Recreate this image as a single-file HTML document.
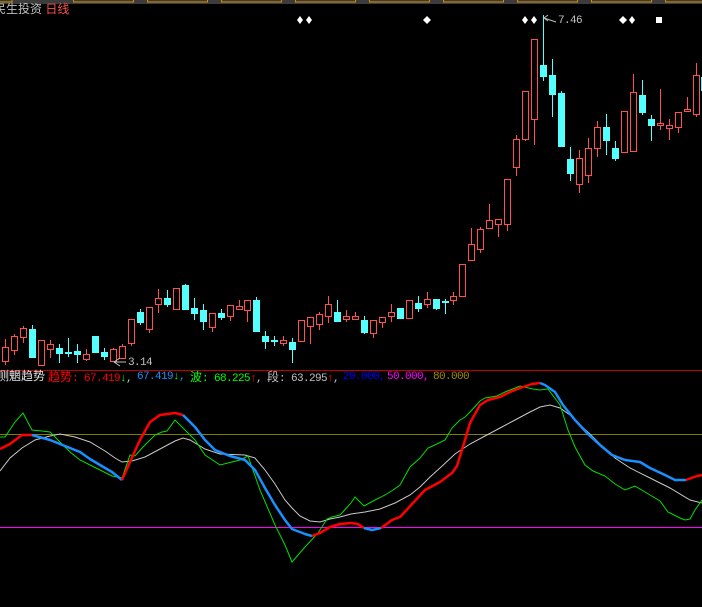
<!DOCTYPE html>
<html><head><meta charset="utf-8">
<style>
html,body{margin:0;padding:0;background:#000;width:702px;height:607px;overflow:hidden;position:relative}
.t{position:absolute;white-space:pre;font-family:"Liberation Mono","Noto Sans CJK SC",monospace;font-size:11px;letter-spacing:-0.6px;line-height:12px}
.c{font-family:"Liberation Sans","Noto Sans CJK SC",sans-serif;font-size:12px;letter-spacing:0}
</style></head><body>
<svg id="s" width="702" height="607" style="position:absolute;left:0;top:0" xmlns="http://www.w3.org/2000/svg">
<rect x="0" y="0" width="702" height="4" fill="#3c3c3c"/>
<g fill="none" stroke="#d89000" stroke-width="1">
<rect x="-60" y="-2" width="72" height="4"/><rect x="73.5" y="-2" width="60" height="4"/><rect x="147.5" y="-2" width="60" height="4"/><rect x="221.5" y="-2" width="60" height="4"/><rect x="295.5" y="-2" width="60" height="4"/><rect x="369.5" y="-2" width="60" height="4"/><rect x="443.5" y="-2" width="60" height="4"/><rect x="517.5" y="-2" width="60" height="4"/><rect x="591.5" y="-2" width="60" height="4"/><rect x="665.5" y="-2" width="60" height="4"/>
</g>
<g id="cs"></g>
<g fill="#fff">
<polygon points="300,16 303,20 300,24 297,20"/><polygon points="309,16 312,20 309,24 306,20"/>
<polygon points="427,16 431,20 427,24 423,20"/>
<polygon points="525,16 528,20 525,24 522,20"/><polygon points="534,16 537,20 534,24 531,20"/>
<polygon points="623,16 627,20 623,24 619,20"/><polygon points="632,16 635,20 632,24 629,20"/>
<rect x="656" y="17" width="6" height="6"/>
</g>
<line x1="0" y1="370.5" x2="702" y2="370.5" stroke="#c00000"/>
<line x1="0" y1="434.5" x2="702" y2="434.5" stroke="#808000"/>
<line x1="0" y1="527.5" x2="702" y2="527.5" stroke="#ff00ff"/>
<polyline fill="none" stroke="#c8c8c8" stroke-width="1" points="0,471 10,458 22,448 35,440 50,436 60,434 75,437 90,442 105,451 115,458 122,462 132,461 145,457 160,449 175,441 183,438 190,440 205,449 220,454 245,455 255,458 265,470 275,484 285,500 292,508 300,516 310,521 320,522 330,519 340,517 351,514 365,512 380,509 395,503 410,495 420,487 430,477 440,468 455,454 470,444 485,436 500,428 515,420 530,412 540,407 550,405 560,408 570,415 580,425 590,434 600,444 615,458 630,468 650,478 670,488 690,500 702,503"/>
<polyline fill="none" stroke="#00e000" stroke-width="1" points="0,437 5,437 15,422 23,413 32,430 42,431 50,432 58,440 70,452 80,460 90,465 100,470 112,476 122,478 130,455 135,456 143,447 155,435 162,432 167,431 175,420 185,430 195,440 205,455 220,465 240,460 248,456 260,490 275,525 285,545 292,562 305,547 318,533 327,519 332,517 340,515 351,503 355,497 364,506 375,500 385,495 393,490 400,485 410,467 420,458 428,448 437,444 445,440 452,428 460,420 465,417 470,412 480,401 485,398 497,396 505,392 520,386 533,389 540,390 548,389 560,405 568,430 575,447 585,465 593,471 605,476 615,484 625,490 635,486 650,495 660,501 668,512 680,518 685,520 690,519 695,510 702,500"/>
<g fill="none" stroke-width="2.5" stroke-linejoin="round">
<polyline stroke="#ff0000" points="0,449 10,444 22,435 32,435"/>
<polyline stroke="#1890ff" points="32,435 50,440 65,446 80,452 90,459 100,465 112,472 122,480"/>
<polyline stroke="#ff0000" points="122,480 130,462 140,440 150,422 160,415 175,413 183,415"/>
<polyline stroke="#1890ff" points="183,415 195,427 205,440 215,450 230,456 245,460 255,470 265,488 275,505 285,520 292,529 305,534 312,536"/>
<polyline stroke="#ff0000" points="312,536 320,533 330,527 340,524 351,523 358,524 364,528"/>
<polyline stroke="#1890ff" points="364,528 372,530 381,528"/>
<polyline stroke="#ff0000" points="381,528 392,520 400,517 413,503 425,490 440,482 452,473 457,466 465,440 470,423 480,405 488,400 500,397 510,392 520,388 532,384 540,383"/>
<polyline stroke="#1890ff" points="540,383 545,385 555,392 563,405 575,420 588,434 600,445 612,455 625,460 640,462 650,468 665,475 675,480 686,480"/>
<polyline stroke="#ff0000" points="686,480 697,476 702,475"/>
</g>
<polyline fill="none" stroke="#c0c0c0" points="120,358 114,362 120,366"/>
<line x1="114" y1="362" x2="126" y2="362" stroke="#c0c0c0"/>
<polyline fill="none" stroke="#c0c0c0" points="548,15 544,18 548,21"/>
<line x1="544" y1="18" x2="556" y2="22" stroke="#c0c0c0"/>
</svg>
<div class="t c" style="left:-6px;top:3px;color:#c0c0c0">民生投资 <span style="color:#ff5050">日线</span></div>
<div class="t" style="left:558px;top:15px;color:#c0c0c0">7.46</div>
<div class="t" style="left:128px;top:357px;color:#c0c0c0">3.14</div>
<div class="t c" style="left:-3px;top:370px;color:#e0e0e0">测魍趋势</div>
<div class="t" style="left:48px;top:371px;color:#ff0000"><span class="c">趋势</span>: 67.419<span style="color:#00ff00">↓</span><span style="color:#c0c0c0">,</span></div>
<div class="t" style="left:137px;top:371px;color:#1890ff">67.419<span style="color:#00ff00">↓</span>,</div>
<div class="t" style="left:190px;top:371px;color:#00ff00"><span class="c">波</span>: 68.225<span style="color:#ff0000">↑</span><span style="color:#c0c0c0">,</span></div>
<div class="t" style="left:267px;top:371px;color:#c0c0c0"><span class="c">段</span>: 63.295<span style="color:#ff0000">↑</span>,</div>
<div class="t" style="left:343px;top:371px;color:#0000ff">20.000,</div>
<div class="t" style="left:387px;top:371px;color:#ff00ff">50.000,</div>
<div class="t" style="left:433px;top:371px;color:#a08c00">80.000</div>
<script>
var d=[[2,347,361,339,364,'r'],[11,336,350,334,354,'r'],[20,328,337,326,342,'r'],[29,329,357,325,357,'c'],[38,340,365,340,365,'r'],[47,344,349,340,357,'r'],[56,348,353,344,362,'c'],[65,352,353,338,356,'c'],[74,351,354,344,362,'c'],[83,354,359,349,360,'r'],[92,336,352,336,352,'c'],[101,352,356,348,359,'c'],[110,349,361,348,361,'r'],[119,346,358,344,358,'r'],[128,319,343,319,345,'r'],[137,312,322,309,324,'c'],[146,307,329,307,332,'r'],[155,298,304,289,312,'r'],[164,298,304,290,306,'c'],[173,288,309,288,309,'r'],[182,285,309,284,309,'c'],[191,308,313,298,319,'c'],[200,310,321,304,329,'c'],[209,313,327,313,331,'r'],[218,313,317,309,319,'c'],[227,305,316,305,320,'r'],[236,306,309,300,309,'r'],[244,300,310,300,321,'r'],[253,300,331,297,331,'c'],[262,336,341,331,348,'c'],[271,340,341,336,345,'c'],[280,340,343,336,345,'r'],[289,342,349,338,362,'c'],[298,320,341,320,341,'r'],[307,317,326,317,343,'r'],[316,314,324,312,329,'r'],[325,304,316,296,322,'r'],[334,312,321,300,321,'c'],[343,316,319,310,321,'r'],[352,316,319,312,319,'r'],[361,320,332,316,333,'c'],[370,320,333,320,337,'r'],[379,317,322,317,327,'r'],[388,312,316,304,321,'r'],[397,308,318,308,318,'c'],[406,300,318,300,318,'r'],[415,303,308,296,311,'c'],[424,299,304,292,307,'r'],[433,299,308,299,309,'c'],[442,301,302,299,313,'c'],[450,296,300,292,304,'r'],[459,264,296,264,296,'r'],[468,244,260,228,260,'r'],[477,229,249,227,252,'r'],[486,220,228,204,228,'r'],[495,219,224,219,236,'r'],[504,179,224,179,230,'r'],[513,139,167,135,175,'r'],[522,91,139,91,140,'r'],[531,39,119,39,144,'r'],[540,65,76,15,80,'c'],[549,75,94,59,116,'c'],[558,93,146,91,146,'c'],[567,159,173,147,180,'c'],[576,158,184,150,192,'r'],[585,148,175,138,182,'r'],[594,127,148,121,156,'r'],[603,127,140,114,154,'c'],[612,148,158,141,160,'c'],[621,111,152,111,152,'r'],[630,92,151,74,151,'r'],[639,95,112,80,114,'c'],[648,119,125,115,140,'c'],[657,123,125,89,129,'r'],[666,125,128,119,139,'r'],[675,112,127,112,132,'r'],[684,109,111,97,111,'r'],[693,75,114,63,116,'r'],[701,77,90,77,90,'c']];
var h='';
d.forEach(function(c){var x=c[0],t=c[1],b=c[2],wt=c[3],wb=c[4],r=c[5]=='r';var col=r?'#ff5050':'#54ffff';
h+='<line x1="'+(x+3.5)+'" y1="'+wt+'" x2="'+(x+3.5)+'" y2="'+(wb+1)+'" stroke="'+col+'"/>';
if(r){h+='<rect x="'+(x+0.5)+'" y="'+(t+0.5)+'" width="6" height="'+Math.max(1,b-t)+'" fill="#000" stroke="'+col+'"/>';}
else{h+='<rect x="'+x+'" y="'+t+'" width="7" height="'+Math.max(1,b-t+1)+'" fill="'+col+'"/>';}
});
document.getElementById('cs').innerHTML=h;
</script>
</body></html>
